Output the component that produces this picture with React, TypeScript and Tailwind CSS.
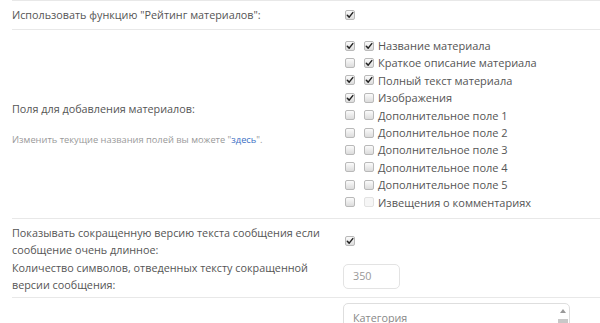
import React from "react";

function Cb({ checked = false, disabled = false }: { checked?: boolean; disabled?: boolean }) {
  return (
    <span
      className={
        "inline-flex items-center justify-center w-[10px] h-[10px] rounded-[2px] border shrink-0 " +
        (disabled
          ? "border-[#e2e2e2] bg-[#f6f6f6]"
          : "border-[#b9b9b9] bg-gradient-to-b from-[#fbfbfb] to-[#dcdcdc]")
      }
    >
      {checked && (
        <svg width="8" height="8" viewBox="0 0 8 8">
          <path d="M1.3 4.2 L3.2 6.1 L6.8 1.6" fill="none" stroke="#222" strokeWidth="1.5" strokeLinecap="round" strokeLinejoin="round" />
        </svg>
      )}
    </span>
  );
}

const fields: [boolean, boolean, string, boolean?][] = [
  [true, true, "Название материала"],
  [false, true, "Краткое описание материала"],
  [true, true, "Полный текст материала"],
  [true, false, "Изображения"],
  [false, false, "Дополнительное поле 1"],
  [false, false, "Дополнительное поле 2"],
  [false, false, "Дополнительное поле 3"],
  [false, false, "Дополнительное поле 4"],
  [false, false, "Дополнительное поле 5"],
  [false, false, "Извещения о комментариях", true],
];

export default function App() {
  return (
    <div className="w-[600px] h-[323px] overflow-hidden bg-white pl-3 text-[10.8px] text-[#555] leading-[17.4px]" style={{ fontFamily: '"Open Sans", "Noto Sans", sans-serif' }}>
      <div className="border-t border-[#e8e8e8] flex h-[29px] items-center">
        <div className="w-[331px] shrink-0">Использовать функцию "Рейтинг материалов":</div>
        <div className="pl-[2px] flex items-center"><Cb checked /></div>
      </div>
      <div className="border-t border-[#e8e8e8] flex py-[7px]">
        <div className="w-[331px] shrink-0 flex flex-col justify-center">
          <div>Поля для добавления материалов:</div>
          <div className="text-[9.3px] text-[#999] mt-[14px]">
            Изменить текущие названия полей вы можете "<span className="text-[#3b6fc4]">здесь</span>".
          </div>
        </div>
        <div className="pl-[2px] flex flex-col">
          {fields.map(([a, b, t, d], i) => (
            <div key={i} className="flex items-center h-[17.4px]">
              <Cb checked={a} />
              <span className="w-[9px]" />
              <Cb checked={b} disabled={!!d} />
              <span className="ml-[4px] text-[11px]">{t}</span>
            </div>
          ))}
        </div>
      </div>
      <div className="border-t border-[#e8e8e8] pt-[5px] pb-[3px]">
        <div className="flex items-center">
          <div className="w-[331px] shrink-0 pr-2">Показывать сокращенную версию текста сообщения если сообщение очень длинное:</div>
          <div className="pl-[2px] flex items-center"><Cb checked /></div>
        </div>
        <div className="flex items-center">
          <div className="w-[331px] shrink-0 pr-2">Количество символов, отведенных тексту сокращенной версии сообщения:</div>
          <div className="w-[57px] h-[25px] border border-[#e3e3e3] rounded-[5px] flex items-center pl-[9px] text-[#999]">350</div>
        </div>
      </div>
      <div className="border-t border-[#e8e8e8] flex pt-[5px]">
        <div className="w-[331px] shrink-0" />
        <div className="w-[227px] h-[60px] border border-[#dedede] rounded-[5px] flex">
          <div className="flex-1 pl-[9px] pt-[5px] text-[#888]">Категория</div>
          <div className="w-[10px] mr-[1px] flex flex-col items-center pt-[5px]">
            <svg width="6" height="4" viewBox="0 0 6 4"><path d="M0 4 L3 0 L6 4 Z" fill="#999" /></svg>
            <div className="w-[10px] h-[6px] mt-[6px] bg-[#c8c8c8]" />
          </div>
        </div>
      </div>
    </div>
  );
}
